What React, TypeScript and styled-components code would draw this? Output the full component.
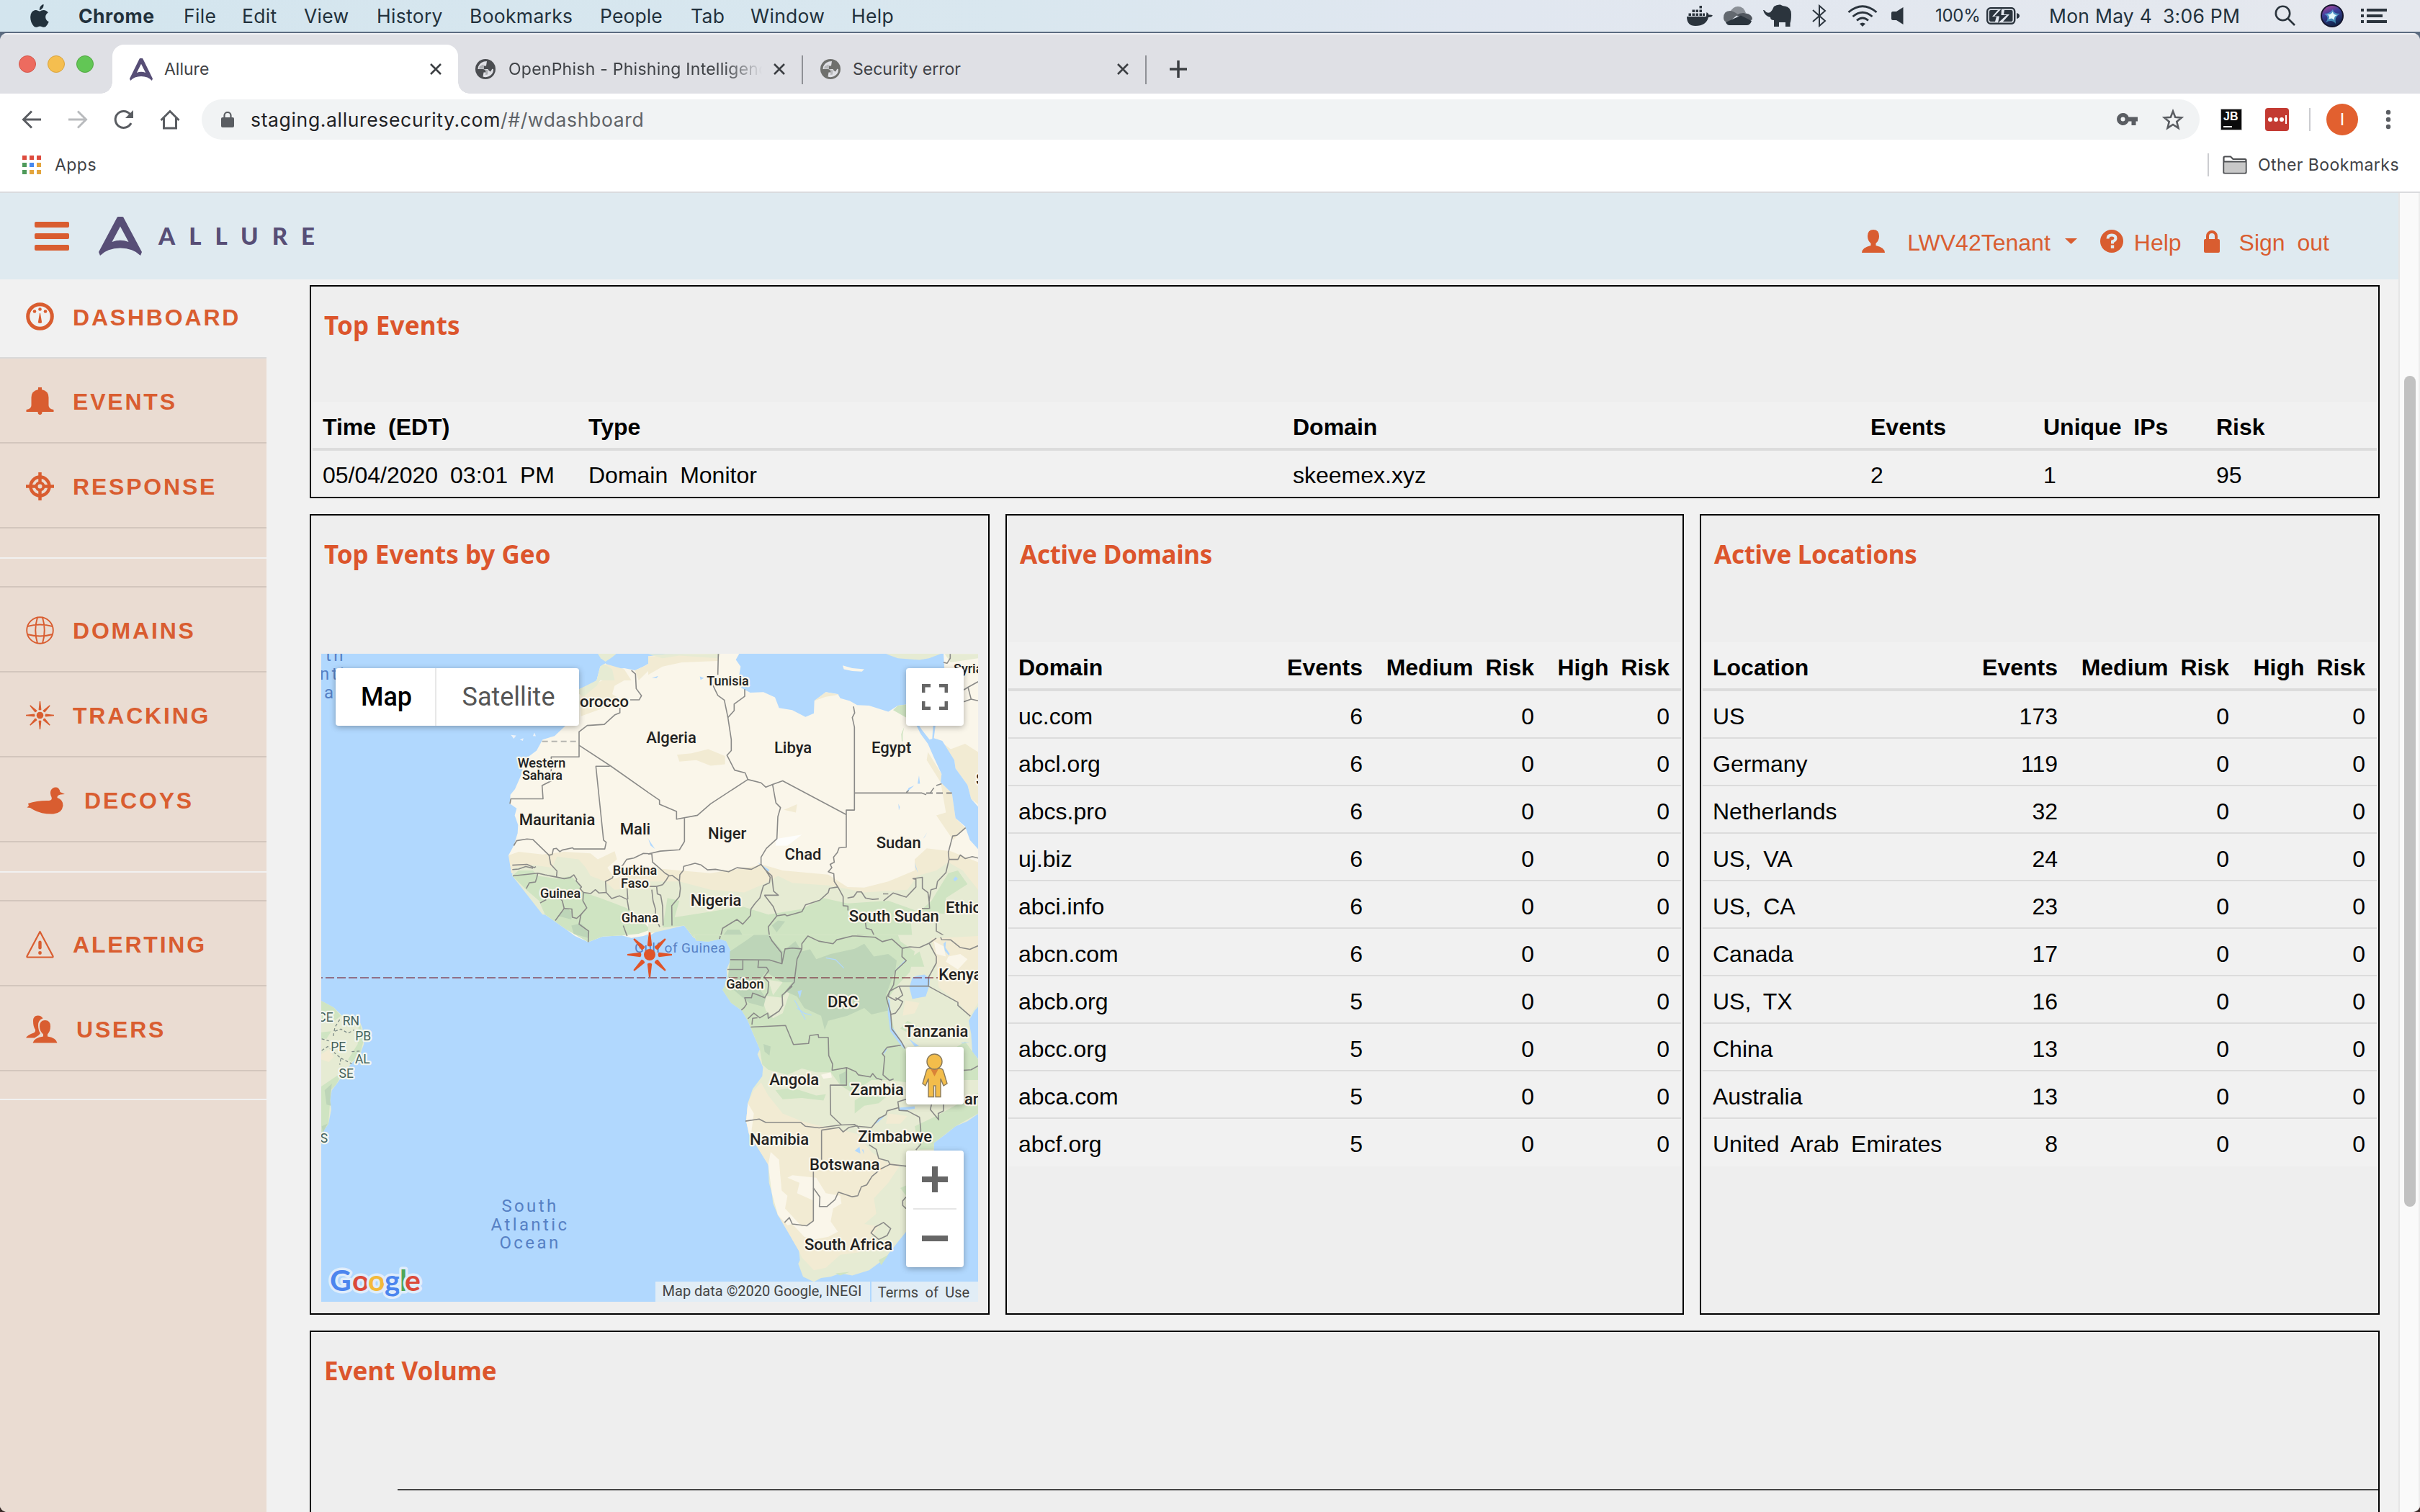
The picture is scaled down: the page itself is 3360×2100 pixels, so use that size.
import React from "react";
import styled, { createGlobalStyle } from "styled-components";

const ORANGE = "#d95d30";
const HELV = `"Liberation Sans", Arial, sans-serif`;
const UI = `Inter, "Liberation Sans", sans-serif`;
const ROBOTO = `Roboto, "Liberation Sans", sans-serif`;

const Global = createGlobalStyle`
  html, body { margin: 0; padding: 0; }
  body { width: 3360px; height: 2100px; overflow: hidden; background: #3b2b28; }
  * { box-sizing: border-box; }
  svg { display: block; flex: none; }
`;

/* ---------- desktop + menu bar ---------- */
const Desktop = styled.div`
  width: 3360px;
  height: 2100px;
  display: flex;
  flex-direction: column;
  background: linear-gradient(#5b6b80 0 200px, #3b2b28 1900px);
  overflow: hidden;
`;
const MenuBar = styled.div`
  height: 44px;
  flex: none;
  display: flex;
  align-items: center;
  padding: 0 46px 0 42px;
  background: linear-gradient(90deg, #d3e5ee 0, #d9e7ef 1400px, #e1e7f0 2100px, #e5e8ee 3360px);
  color: #22313c;
  font: 400 26.5px/44px ${UI};
  white-space: pre;
`;
const MenuItem = styled.span<{ $w: number; $bold?: boolean; $ls?: number }>`
  width: ${(p) => p.$w}px;
  flex: none;
  font-weight: ${(p) => (p.$bold ? 700 : 400)};
  letter-spacing: ${(p) => p.$ls ?? 0.3}px;
`;
const Slot = styled.span<{ $w: number }>`
  width: ${(p) => p.$w}px;
  flex: none;
  display: flex;
  align-items: center;
`;
const Percent = styled(Slot)`
  font-size: 24px;
  letter-spacing: -0.3px;
  text-indent: -2px;
`;
const Clock = styled(Slot)`
  letter-spacing: 0.25px;
`;
const Grow = styled.div`
  flex: 1;
`;

/* ---------- browser window ---------- */
const Window = styled.div`
  margin-top: 2px;
  flex: 1;
  min-height: 0;
  display: flex;
  flex-direction: column;
  border-radius: 10px;
  overflow: hidden;
  background: #fff;
`;
const TabStrip = styled.div`
  height: 84px;
  flex: none;
  display: flex;
  align-items: flex-end;
  background: #dfe0e5;
  border-top: 2px solid #f2f2f5;
  font: 400 23px/68px ${UI};
  color: #3f4246;
`;
const Lights = styled.div`
  width: 156px;
  height: 82px;
  display: flex;
  align-items: center;
  gap: 16px;
  padding-left: 26px;
`;
const Light = styled.i<{ $c: string; $b: string }>`
  width: 24px;
  height: 24px;
  border-radius: 50%;
  background: ${(p) => p.$c};
  border: 1px solid ${(p) => p.$b};
`;
const Tab = styled.div<{ $active?: boolean; $w: number }>`
  width: ${(p) => p.$w}px;
  height: 68px;
  display: flex;
  align-items: center;
  padding: 0 23px 0 ${(p) => (p.$active ? 24 : 24)}px;
  position: relative;
  border-radius: 16px 16px 0 0;
  background: ${(p) => (p.$active ? "#fff" : "transparent")};
  &::before, &::after {
    content: "";
    display: ${(p) => (p.$active ? "block" : "none")};
    position: absolute;
    bottom: 0;
    width: 16px;
    height: 16px;
  }
  &::before { left: -16px; background: radial-gradient(circle at 0 0, transparent 15.5px, #fff 16px); }
  &::after { right: -16px; background: radial-gradient(circle at 100% 0, transparent 15.5px, #fff 16px); }
`;
const TabTitle = styled.span<{ $fade?: boolean; $ml?: number }>`
  flex: 1;
  margin-left: ${(p) => p.$ml ?? 18}px;
  overflow: hidden;
  white-space: nowrap;
  margin-right: 16px;
  ${(p) => p.$fade && "letter-spacing: 0.25px; mask-image: linear-gradient(90deg, #000 85%, transparent 100%);"}
`;
const NewTab = styled.div`
  height: 68px;
  display: flex;
  align-items: center;
  padding-left: 32px;
`;
const TabRule = styled.i`
  width: 2px;
  height: 40px;
  margin-bottom: 13px;
  background: #8f9196;
`;
const Toolbar = styled.div`
  height: 72px;
  flex: none;
  display: flex;
  align-items: center;
  padding: 0 40px 0 30px;
`;
const NavIcons = styled.div`
  width: 250px;
  display: flex;
  gap: 36px;
`;
const Omnibox = styled.div`
  width: 2774px;
  height: 56px;
  border-radius: 28px;
  background: #f1f3f4;
  display: flex;
  align-items: center;
  padding: 0 22px 0 27px;
  font: 400 26.5px/56px ${UI};
  letter-spacing: 0.65px;
  color: #5f6368;
  b { font-weight: 400; color: #1f2124; }
  span { margin-left: 23px; }
`;
const Extensions = styled.div`
  flex: 1;
  display: flex;
  align-items: center;
  padding-left: 29px;
`;
const JBadge = styled.div`
  width: 30px;
  height: 30px;
  background: #0b0b0c;
  color: #fff;
  font: 700 16px/18px ${HELV};
  padding: 1px 3px;
  border: 1px solid #b9b9b9;
  &::after { content: ""; display: block; width: 12px; height: 2px; background: #fff; margin-top: 4px; }
`;
const PassBadge = styled.div`
  width: 33px;
  height: 32px;
  margin-left: 32px;
  border-radius: 4px;
  background: #c33a32;
  display: flex;
  align-items: center;
  justify-content: center;
  gap: 2px;
  i { width: 6px; height: 6px; border-radius: 50%; background: #fff; }
  b { width: 2px; height: 12px; background: #fff; }
`;
const VRule = styled.i<{ $ml: number }>`
  width: 2px;
  height: 32px;
  margin-left: ${(p) => p.$ml}px;
  background: #cbccd0;
`;
const Avatar = styled.div`
  width: 44px;
  height: 44px;
  margin-left: 22px;
  border-radius: 50%;
  background: #e2602f;
  color: #fff;
  text-align: center;
  font: 400 24px/44px ${ROBOTO};
`;
const Bookmarks = styled.div`
  height: 66px;
  flex: none;
  display: flex;
  align-items: center;
  padding: 0 29px 10px 31px;
  border-bottom: 2px solid #dadbde;
  font: 400 23px/56px ${UI};
  letter-spacing: 0.45px;
  color: #3f4246;
`;
const AppsGrid = styled.div`
  display: grid;
  grid-template-columns: repeat(3, 6px);
  gap: 4px;
  margin-right: 19px;
  i { height: 6px; }
`;
const FolderIcon = styled.svg`
  margin: 0 15px 0 19px;
`;
const StarIcon = styled.svg`
  margin-left: 33px;
`;

/* ---------- page ---------- */
const Viewport = styled.div`
  flex: 1;
  min-height: 0;
  display: flex;
`;
const Page = styled.div`
  width: 3330px;
  display: flex;
  flex-direction: column;
  background: #f1f1f1;
  font: 400 32px/36px ${HELV};
  word-spacing: 8px;
  color: #000;
`;
const Scroll = styled.div`
  width: 30px;
  padding: 254px 0 0 6px;
  background: #fafafa;
  border-left: 2px solid #e6e6e6;
  border-right: 2px solid #ededed;
`;
const Thumb = styled.div`
  width: 16px;
  height: 1154px;
  border-radius: 8px;
  background: #c1c1c1;
`;
const Header = styled.header`
  height: 120px;
  flex: none;
  display: flex;
  align-items: center;
  padding: 0 96px 0 48px;
  background: #dfeaf0;
  color: ${ORANGE};
`;
const Burger = styled.div`
  width: 48px;
  margin-right: 41px;
  display: grid;
  gap: 8px;
  i { height: 8px; border-radius: 2px; background: ${ORANGE}; }
`;
const Wordmark = styled.span`
  margin: 0 0 2px 23px;
  font: 900 33px/40px Lato, sans-serif;
  letter-spacing: 19px;
  color: #574e76;
`;
const UserNav = styled.nav`
  display: flex;
  align-items: center;
  padding-top: 14px;
  line-height: 40px;
`;
const NavText = styled.span<{ $ml: number; $mr: number }>`
  margin-left: ${(p) => p.$ml}px;
  margin-right: ${(p) => p.$mr}px;
  padding-top: 3px;
`;
const CircleHelp = styled.svg`
  margin-left: 32px;
`;
const Body = styled.div`
  flex: 1;
  min-height: 0;
  display: flex;
`;
const Sidebar = styled.aside`
  width: 370px;
  flex: none;
  background: #eadcd2;
`;
const SideItem = styled.div<{ $active?: boolean }>`
  height: ${(p) => (p.$active ? 110 : 118)}px;
  display: flex;
  align-items: center;
  padding: 0 0 0 36px;
  border-bottom: 2px solid ${(p) => (p.$active ? "#d9d9d9" : "#d3c6bd")};
  background: ${(p) => (p.$active ? "#f1f1f1" : "transparent")};
  color: ${ORANGE};
  font-weight: 700;
  letter-spacing: 2.8px;
  svg { margin: ${(p) => (p.$active ? -4 : 3)}px 25px 0 0; }
  span { padding-top: ${(p) => (p.$active ? 0 : 4)}px; margin-top: ${(p) => (p.$active ? -2 : 0)}px; }
`;
const SideGap = styled.div<{ $open?: boolean }>`
  height: ${(p) => (p.$open ? 40 : 82)}px;
  border-bottom: 2px solid ${(p) => (p.$open ? "#f1f1f1" : "#d3c6bd")};
  &::before {
    content: "";
    display: ${(p) => (p.$open ? "none" : "block")};
    height: 40px;
    border-bottom: 2px solid #f1f1f1;
  }
`;
const Main = styled.main`
  flex: 1;
  display: flex;
  flex-direction: column;
  gap: 22px;
  padding: 8px 26px 0 60px;
  min-width: 0;
`;
const Card = styled.section<{ $h: number }>`
  height: ${(p) => p.$h}px;
  flex: none;
  border: 2px solid #000;
  background: #eee;
  min-width: 0;
  display: flex;
  flex-direction: column;
`;
const Trio = styled.div`
  display: grid;
  grid-template-columns: 944px 942px 944px;
  gap: 22px;
`;
const Title = styled.h2<{ $h: number; $ls?: number }>`
  margin: 0;
  height: ${(p) => p.$h}px;
  flex: none;
  padding: 32px 0 0 18px;
  font: 700 35px/44px "Noto Sans", "Open Sans", sans-serif;
  letter-spacing: ${(p) => p.$ls ?? 0}px;
  word-spacing: 0;
  color: #dc552c;
`;
const Row = styled.div<{ $head?: boolean; $h: number }>`
  height: ${(p) => p.$h}px;
  flex: none;
  display: flex;
  align-items: center;
  padding: 5px 16px 0 14px;
  margin: 0 2px;
  background: #f1f1f1;
  font-weight: ${(p) => (p.$head ? 700 : 400)};
  border-bottom: ${(p) => (p.$head ? "4px solid #dcdcdc" : "2px solid #dcdcdc")};
  &:last-child { border-bottom-color: transparent; }
`;
const Cell = styled.span<{ $w?: number; $right?: boolean }>`
  ${(p) => (p.$w ? `width: ${p.$w}px; flex: none;` : "flex: 1;")}
  text-align: ${(p) => (p.$right ? "right" : "left")};
  white-space: nowrap;
`;
const TableWrap = styled.div`
  display: flex;
  flex-direction: column;
`;
const Axis = styled.div`
  margin-left: 120px;
  height: 2px;
  background: #444;
`;

/* ---------- map ---------- */
const MapCanvas = styled.div`
  width: 912px;
  height: 900px;
  margin-left: 14px;
  position: relative;
  overflow: hidden;
  background: #b1d8fe;
  font-family: ${ROBOTO};
`;
const Control = styled.div<{ $x: number; $y: number; $w: number; $h: number }>`
  position: absolute;
  left: ${(p) => p.$x}px;
  top: ${(p) => p.$y}px;
  width: ${(p) => p.$w}px;
  height: ${(p) => p.$h}px;
  background: #fff;
  border-radius: 4px;
  box-shadow: 0 2px 8px rgba(0, 0, 0, 0.3);
  display: flex;
  flex-direction: column;
  align-items: center;
  justify-content: space-evenly;
`;
const MapTypes = styled(Control)`
  flex-direction: row;
  justify-content: flex-start;
  font: 400 36px/80px ${ROBOTO};
  color: #565656;
  text-align: center;
  b { width: 140px; height: 80px; padding-left: 3px; font-weight: 500; color: #000; border-right: 2px solid #e8e8e8; }
  span { flex: 1; padding-left: 2px; }
`;
const ZoomRule = styled.i`
  width: 60px;
  height: 2px;
  background: #e6e6e6;
`;
const Credits = styled.div`
  position: absolute;
  right: 0;
  bottom: 0;
  height: 28px;
  display: flex;
  gap: 2px;
  font: 400 20px/26px ${ROBOTO};
  word-spacing: 0;
  color: #444;
  white-space: nowrap;
  span { background: #e1edf6; text-align: center; }
  span:first-child { width: 298px; padding-right: 2px; letter-spacing: 0; }
  span:last-child { width: 148px; padding-right: 3px; word-spacing: 4.5px; line-height: 30px; }
`;

const LAND = "#faf6ea";
const SAND = "#f2ebd3";
const PALE = "#e6ebd3";
const GREEN = "#cfe4c2";
const DARK = "#bdd5b8";
const SEA = "#b1d8fe";

const nwBorders = [
  "M1370 604 1387 617 1390 670 1412 696 1402 711 1365 711",
  "M1322 740 1322 758 1300 766 1257 800 1186 804 1152 827 1152 918 1036 918 1036 1005 998 1022 1002 1070 868 1070 864 1088",
  "M1152 876 1282 950 1486 1075 1486 1090 1500 1097",
  "M1280 952 1222 952 1254 1220 1265 1228 1259 1252 1130 1252 1125 1248 1082 1256 1072 1262 1058 1250 1045 1252 1040 1272 1027 1275 960 1218 935 1216 892 1222 880 1240",
  "M1027 1275 1034 1308 1060 1332 1058 1354 1010 1346 980 1340 876 1350",
  "M874 1311 935 1308 965 1320 972 1316M874 1327 900 1325 930 1316 960 1322",
  "M980 1340 976 1356 970 1372 945 1375 932 1396",
  "M1058 1354 1090 1360 1115 1356 1130 1346 1142 1362 1140 1368 1162 1390 1156 1396 1170 1410 1168 1440 1184 1466 1160 1490 1142 1504 1124 1500 1122 1470 1090 1468 1053 1512",
  "M1090 1468 1082 1440 1072 1432M990 1448 1015 1436M1160 1490 1152 1525 1192 1550 1190 1590",
  "M1170 1410 1200 1414 1220 1400 1235 1412 1265 1410 1288 1432 1320 1422 1352 1435 1360 1475M1336 1530 1352 1568",
  "M1265 1410 1262 1370 1290 1358 1300 1340 1335 1310 1350 1290 1380 1285 1420 1268 1460 1270 1500 1258",
  "M1460 1270 1458 1300 1490 1320M1352 1395 1355 1435M1443 1388 1455 1420 1465 1450 1470 1500 1490 1530",
];
const neBorders = [
  "M292 544 290 620M265 650 290 695 317 712 332 775 346 855 346 895 328 912 360 966 404 976 415 1000 470 1012 490 1028 518 1018 560 1005 824 1127",
  "M402 672 402 698 358 726 358 750 332 775",
  "M415 1000 260 1088 205 1130 118 1144 118 1116 47 1090 47 1075 0 1047",
  "M518 1018 532 1085 551 1102 540 1135 536 1215 492 1250 470 1282 470 1308 430 1326 370 1320 335 1335 280 1326 247 1328 220 1310 195 1304 148 1315 146 1330 132 1345 130 1368 134 1395 130 1425 98 1458 99 1530",
  "M151 1140 151 1225 130 1255 50 1260 0 1270",
  "M470 1308 490 1330 515 1350 522 1405 542 1420 484 1420M490 1330 508 1355 505 1375 480 1385 465 1430 445 1450 428 1470 425 1495 394 1525 370 1508 310 1540 302 1568",
  "M484 1420 520 1460 536 1495 500 1535 505 1568M536 1495 570 1490 578 1495 640 1480 655 1455 715 1438 750 1410 755 1395 790 1390 812 1425 812 1458 832 1460 832 1475",
  "M855 735 860 758 850 775 859 810 859 1111 825 1111 825 1246 795 1248 788 1265 772 1282 775 1300 758 1308 765 1320 750 1335 773 1342 775 1370 790 1390",
  "M859 1049 1140 1049 1158 1055M1075 1047 1085 1040M1175 1049 1190 1030M1200 1022 1222 1015",
  "M830 1430 855 1426 870 1408 888 1408 905 1430 935 1435 960 1433M978 1415 1000 1415M980 1440 1020 1412 1075 1427 1115 1390 1115 1362 1103 1360 1142 1355 1142 1395 1165 1410 1170 1440 1172 1468 1140 1468",
  "M1170 1440 1178 1400 1200 1395 1205 1370 1240 1338 1253 1290 1250 1265 1268 1205 1285 1203 1322 1175",
  "M1253 1290 1290 1290 1300 1274 1320 1287 1350 1280 1374 1285",
  "M905 1520 908 1540 930 1545 942 1568M1200 1520 1200 1550 1230 1565M870 1565 930 1568",
  "M1314 675 1332 665 1374 645M1332 665 1345 708M1314 718 1345 708 1374 714M1230 575 1245 578 1258 560 1258 544",
  "M0 1270 15 1270 18 1300 45 1320 70 1340 90 1350 100 1348 130 1368M0 1388 35 1388 60 1382 75 1365 85 1350M35 1388 38 1415 52 1420 60 1460 62 1530M15 1400 20 1440 30 1470 30 1500 48 1535",
];
const seBorders = [
  "M342 92 505 93 557 108 570 50 600 47 640 50M505 0 515 18 555 65 557 108M300 0 297 12",
  "M394 95 394 130 330 130M460 95 457 122 493 122 502 135 482 160 502 180 498 220 485 240 460 230 435 222 430 240 402 240 410 265 400 278 388 288",
  "M640 50 620 90 608 180 570 220M600 195 558 230 560 270 545 292 500 320 498 300 465 318 440 300 415 322M432 345 435 320 455 318",
  "M640 50 640 30 665 0 710 20 770 30 785 15 850 0 865 0 945 5 975 22 1015 12 1058 48 1057 80 1075 96 1030 135 1022 190 992 240 1010 300 1015 362 1052 408 1070 438",
  "M427 354 572 348 605 422 668 418 673 387 708 383 710 395 750 395 752 465 768 498 766 522 826 512 826 580 758 580 760 695 805 735",
  "M826 512 865 528 875 540 925 548 935 535 950 552 975 560",
  "M1058 48 1090 42 1130 45 1170 28 1200 8M1170 28 1200 80 1200 105 1168 160 1167 195 1045 195",
  "M1167 195 1290 258 1290 270 1342 312M1045 195 1060 230 1030 250 1000 235 1005 215 1045 195M1030 240 1060 255 1050 275 1030 300 1010 305",
  "M1052 425 995 433 975 458 985 470 978 540 1005 562 1022 556M1218 5 1222 14 1260 15 1300 45 1340 52 1374 38",
  "M405 720 462 712 490 725 635 725 655 740 712 746 800 735 860 733 870 740 930 745 960 710 990 695 995 680 1042 668",
  "M722 755 795 745 812 762 835 745 870 738 885 760M722 755 722 870M688 915 688 1108 660 1127 600 1120 588 1095 568 1114",
  "M688 980 715 1015 713 1052 745 1052 778 1025 792 996 850 1014 873 1010 888 975 910 968 932 935 970 905 1007 888 1074 895",
  "M920 812 950 830 960 865 1000 875 1007 888M1074 635 1040 645 1045 678 1080 680 1130 705 1135 750 1135 810 1115 832",
  "M1180 655 1175 675 1210 715 1208 690 1230 680 1230 655M928 1155 945 1132 980 1114 1010 1138 995 1165 960 1180ZM1074 1015 1060 1030 1060 1048 1074 1060M1314 522 1345 520 1374 505",
];

const Borders = ({ d }: { d: string[] }) => (
  <g fill="none" stroke="#8a8a88" strokeWidth={1.6} strokeLinejoin="round">
    {d.map((p) => (
      <path key={p} d={p} vectorEffect="non-scaling-stroke" />
    ))}
  </g>
);

type Label = [string, number, number, number?, ("start" | "end")?];
const labels: Label[] = [
  ["Morocco", 873, 982, 22, "end"],
  ["Western", 752, 1066, 18],
  ["Sahara", 753, 1083, 18],
  ["Mauritania", 773.5, 1146],
  ["Mali", 882, 1159],
  ["Burkina", 881.5, 1214.5, 18],
  ["Faso", 881.5, 1233, 18],
  ["Guinea", 778, 1246.5, 18],
  ["Ghana", 888.5, 1281, 18],
  ["Algeria", 932, 1032],
  ["Tunisia", 1010.5, 951.5, 18],
  ["Libya", 1101, 1046],
  ["Egypt", 1237.7, 1046],
  ["Niger", 1009.7, 1165],
  ["Chad", 1115, 1194],
  ["Sudan", 1247.7, 1178],
  ["Nigeria", 994, 1257.5],
  ["South Sudan", 1241.3, 1280],
  ["Ethiopia", 1313, 1268, 22, "start"],
  ["Syria", 1324, 934.5, 18, "start"],
  ["Saudi", 1355, 1089.5, 22, "start"],
  ["Gabon", 1034.3, 1372.5, 18],
  ["DRC", 1170.3, 1398.6],
  ["Kenya", 1303.3, 1361, 22, "start"],
  ["Tanzania", 1300, 1439.6],
  ["Angola", 1102.7, 1507],
  ["Zambia", 1217.7, 1520.7],
  ["Namibia", 1082, 1589.6],
  ["Zimbabwe", 1242.7, 1586.4],
  ["Botswana", 1172.7, 1624.6],
  ["South Africa", 1178, 1735.7],
  ["ar", 1339, 1534, 22, "start"],
];
const states: [string, number, number][] = [
  ["CE", 452, 1418.6],
  ["RN", 487.3, 1423.6],
  ["PB", 504.3, 1444.6],
  ["PE", 469.7, 1459.6],
  ["AL", 503.3, 1477],
  ["SE", 480.7, 1496.8],
  ["S", 450, 1586.8],
];

const RAYS = [0, 45, 90, 135, 180, 225, 270, 315];
const Burst = ({ r, dot }: { r: number; dot: number }) => (
  <g>
    <circle r={dot} />
    {RAYS.map((a) => (
      <path
        key={a}
        transform={`rotate(${a})`}
        d={`M${-dot * 0.4} ${-dot * 1.6}Q0 ${-dot * 1.3} ${dot * 0.4} ${-dot * 1.6}L${dot * 0.14} ${-r}H${-dot * 0.14}Z`}
      />
    ))}
  </g>
);

const googleLetters: [string, number, string][] = [
  ["G", 458, "#4c85ee"], ["o", 489, "#db4a3a"], ["o", 511, "#f3b93a"],
  ["g", 534, "#4c85ee"], ["l", 555, "#4fa65a"], ["e", 562, "#db4a3a"],
];

const AfricaMap = () => (
  <svg width="912" height="900" viewBox="446 908 912 900">
    {/* north-west */}
    <g transform="translate(420 700) scale(.33333 .38265)">
      <path fill={PALE} d="M1228 540 1242 560 1262 572 1290 556 1312 540Z" />
      <path
        fill={LAND}
        d="M1510 548 1470 565 1420 590 1385 604 1340 596 1290 602 1262 578 1240 590 1225 640 1200 655 1152 672 1130 760 1095 805 1050 842 1000 855 975 895 945 915 920 950 910 985 885 1035 866 1055 864 1088 892 1105 884 1130 898 1165 896 1195 880 1240 858 1275 880 1305 874 1350 900 1370 932 1400 985 1440 1010 1490 1060 1520 1100 1545 1135 1568 1190 1590 1250 1570 1330 1566 1370 1575 1420 1568 1510 1540Z"
      />
      <path fill={SAND} d="M1510 548 1420 590 1385 604 1400 640 1440 606 1510 620ZM1262 580 1250 640 1225 650 1152 672 1160 770 1240 745 1330 712 1290 690 1300 660 1340 640 1370 640 1340 600Z" />
      <path fill={PALE} d="M1256 580 1290 600 1300 640 1240 640 1225 660 1170 700 1152 690 1152 672 1225 640 1240 590Z" />
      <path fill={SAND} d="M858 1275 900 1262 1000 1272 1090 1262 1200 1268 1230 1290 1300 1260 1310 1290 1270 1320 1300 1360 1390 1330 1510 1350 1510 1400 1300 1430 870 1340Z" />
      <path fill={PALE} d="M880 1320 960 1310 1040 1320 1060 1280 1150 1290 1180 1320 1200 1350 1260 1370 1300 1400 1400 1390 1510 1400 1510 1500 1000 1490 874 1350Z" />
      <path fill={GREEN} d="M874 1350 900 1330 960 1330 980 1350 1060 1360 1120 1350 1150 1380 1170 1410 1240 1430 1300 1450 1360 1470 1400 1500 1450 1545 1400 1560 1330 1566 1250 1570 1190 1590 1100 1545 1010 1490 985 1440 932 1400Z" />
      <path fill={DARK} d="M1062 1495 1100 1466 1122 1480 1120 1508ZM1120 1530 1160 1522 1192 1550 1190 1575 1130 1560Z" />
      <path fill="#eef3f8" d="M868 838 890 840 880 852ZM905 855 920 850 918 860ZM960 842 966 830 972 843Z" />
      <path fill={SEA} d="M1455 636 1482 624 1480 632ZM1435 1210 1468 1252 1462 1250Z" />
      <Borders d={nwBorders} />
      <path d="M998 862H1152" stroke="#b5b5b0" strokeWidth="2" strokeDasharray="8 5" vectorEffect="non-scaling-stroke" />
    </g>
    {/* north-east */}
    <g transform="translate(900 700) scale(.33333 .38265)">
      <path
        fill={LAND}
        d="M0 553 70 545 380 542 365 565 385 590 375 640 388 668 425 685 480 683 528 702 545 740 600 748 655 773 690 760 692 715 740 683 790 690 800 705 840 715 870 730 920 732 1000 754 1040 732 1074 728 1240 700 1230 540 1380 540V1575H190L150 1530 100 1530 60 1537 0 1570Z"
      />
      <path fill={SAND} d="M0 553 300 544 290 570 140 575 60 590 0 620ZM120 910 180 905 250 890 320 915 320 945 260 950 200 930 130 935ZM690 715 740 683 795 692 740 700ZM565 1110 620 1090 615 1120ZM1200 850 1260 890 1320 870 1374 900V1090L1345 1070 1330 1020 1280 960 1275 930ZM1165 900 1222 980 1218 1010 1160 930ZM1218 1010 1265 1050 1280 1140 1320 1175 1270 1220 1200 1130 1240 1120Z" />
      <path fill={PALE} d="M0 545 60 560 130 550 290 560 300 544ZM990 544 1230 540 1170 560 1130 566 1040 560ZM1235 544 1374 544V560L1260 575Z" />
      <path fill={SAND} d="M0 1320 130 1330 260 1340 480 1310 560 1330 750 1345 830 1390 900 1392 1000 1370 1110 1330 1110 1290 1160 1250 1260 1260 1374 1300V1450H0Z" />
      <path fill={PALE} d="M0 1370 130 1370 260 1400 400 1410 480 1380 540 1350 600 1375 760 1385 900 1410 1080 1400 1120 1350 1200 1330 1250 1300 1310 1330 1374 1400V1575H190L150 1530 0 1560Z" />
      <path fill={GREEN} d="M60 1537 80 1430 130 1440 110 1500 260 1480 390 1460 500 1490 640 1470 730 1430 830 1450 1000 1440 1130 1480 1180 1440 1250 1340 1290 1330 1330 1380 1240 1430 1230 1530 1374 1500V1575H190L150 1530Z" />
      <path fill={PALE} d="M1090 1475 1374 1500 1374 1575 1100 1575Z" />
      <path fill={DARK} d="M310 1568 330 1545 380 1545 395 1568ZM515 1530 540 1512 570 1515 535 1555Z" />
      <path fill="#fdfdfb" d="M535 1215 640 1200 580 1240 530 1240Z" />
      <path fill={GREEN} d="M1074 728 1040 732 1020 748 1074 775ZM1066 810 1054 835 1056 862 1060 862 1060 835Z" />
      <path
        fill={SEA}
        d="M1115 800 1135 835 1165 870 1190 920 1222 980 1218 1010 1265 1050 1280 1140 1320 1170 1340 1220 1380 1258V1105L1345 1070 1330 1020 1280 960 1275 930 1225 860 1190 850 1197 800 1187 800 1183 852 1172 855 1140 820 1125 800ZM15 632 42 624 35 632ZM215 626 232 632 218 638ZM1085 1030 1108 1022 1075 1047ZM1122 1015 1128 985 1132 1015ZM1042 1088 1048 1100 1044 1112ZM1145 1215 1162 1192 1152 1208ZM1110 1300 1124 1340 1114 1320ZM1270 1362 1280 1352 1290 1360 1278 1370ZM0 1215 28 1252 10 1240ZM455 1300 505 1328 500 1335Z"
      />
      <path fill={LAND} d="M810 586 850 596 900 600 890 608 850 606 815 600Z" />
      <Borders d={neBorders} />
      <path d="M1158 1049H1265" stroke="#858585" strokeWidth="2" strokeDasharray="9 5" vectorEffect="non-scaling-stroke" />
    </g>
    {/* Brazil */}
    <g transform="translate(420 1300) scale(.33333 .35714)">
      <path fill={PALE} d="M70 248 130 278 165 310 235 325 250 360 256 420 240 460 200 500 140 578 122 600 115 640 120 675 108 730 78 770 70 770Z" />
      <path fill={GREEN} d="M70 248 130 278 160 310 120 340 70 330ZM235 325 256 400 240 460 205 490 190 480 230 420ZM70 375 120 370 100 400 70 400ZM180 510 140 578 118 600 108 730 78 770 70 770V590L150 540Z" />
      <path fill={DARK} d="M92 600 122 575 115 640 118 660 100 655ZM80 740 104 730 85 765Z" />
      <path fill={SAND} d="M78 460 110 440 130 470 110 490 78 480Z" />
      <path fill="none" stroke="#7d8b87" strokeWidth="1.3" strokeDasharray="4 3" vectorEffect="non-scaling-stroke" d="M155 325 135 355 128 390M135 370 160 362 190 378 215 365M80 400 110 408M80 445 105 430 140 460 160 475 155 500M160 475 205 497M205 450 245 447" />
    </g>
    {/* south-east */}
    <g transform="translate(900 1300) scale(.33333 .35714)">
      <path
        fill={PALE}
        d="M188 -4 200 18 250 22 300 12 325 20 345 60 340 100 326 130 330 170 310 210 345 260 390 290 415 330 430 365 465 440 455 460 478 510 475 545 435 595 415 650 408 720 420 770 455 820 500 890 503 960 515 1000 520 1040 540 1085 580 1125 600 1180 628 1225 632 1260 625 1275 645 1325 690 1345 720 1330 760 1325 800 1312 850 1320 920 1300 985 1255 1040 1190 1074 1150 1110 1050 1190 900 1190 805 1240 770 1280 740 1330 720 1380 688V485L1350 450 1345 380 1335 330 1360 290 1380 270V-4Z"
      />
      <path fill={GREEN} d="M190 -4 200 18 250 22 300 12 325 20 345 60 340 100 330 170 310 210 345 260 390 290 415 330 465 440 475 500 500 520 580 540 640 515 700 530 760 530 800 580 850 610 930 560 1000 560 1080 570 1072 438 1030 390 1010 300 1000 240 1040 190 1090 140 1110 60 1050 20 1040 -4Z" />
      <path fill={PALE} d="M470 230 560 240 600 190 560 300 520 320 490 290ZM500 170 560 180 520 230Z" />
      <path fill={DARK} d="M340 60 420 10 440 -4 500 -4 560 60 640 0 700 90 760 70 860 50 900 30 940 80 1000 70 1035 95 1030 130 990 230 1000 290 930 305 900 280 830 310 750 330 735 365 720 310 650 280 620 235 570 215 600 180 560 180 490 140 450 190 490 240 480 275 420 260 330 190 340 100ZM480 420 510 430 505 465 485 450ZM795 540 826 525 826 575 800 575Z" />
      <path fill={GREEN} d="M600 0 740 0 720 40 640 60ZM530 600 600 590 700 620 740 615 730 640 640 630 560 635ZM860 640 930 600 1000 620 960 650 900 660 860 690ZM1270 440 1320 410 1374 480V560H1314V440ZM1110 740 1200 700 1374 610V690L1280 740 1190 805V830H1130ZM1080 120 1100 80 1130 60 1150 120ZM1050 360 1080 330 1120 350 1090 380ZM1050 980 1074 970V1010ZM960 1260 1000 1240 970 1280ZM780 1312 840 1306 800 1320Z" />
      <path fill={SAND} d="M440 600 470 570 500 620 560 690 640 720 722 740 790 750 870 770 930 840 990 880 1050 890 1000 960 940 1020 950 1080 900 1120 960 1130 920 1180 880 1230 800 1240 740 1290 690 1300 640 1250 628 1225 600 1180 540 1085 500 890 420 770 408 720 415 650ZM1180 10 1374 0V260L1340 310 1290 258 1210 200 1200 105ZM1070 250 1130 260 1110 300 1060 310ZM1000 690 1080 700 1050 730 990 730Z" />
      <path fill={LAND} d="M415 650 440 690 430 760 450 800 420 770 408 720ZM510 840 545 870 550 930 556 990 580 1010 570 1060 640 1130 690 1110 690 1030 620 1000 630 960 580 940 600 930 700 940 740 1000 800 1010 805 1040 770 1060 760 1110 790 1150 750 1170 690 1180 650 1170 600 1120 580 1125 540 1085 515 1000 500 890ZM1250 80 1300 70 1330 90 1290 130 1240 100ZM1190 20 1230 40 1240 80 1200 70ZM720 540 760 530 765 550 730 555Z" />
      <path fill={SEA} d="M1100 162 1120 155 1150 150 1174 165 1172 190 1156 235 1100 245 1088 200ZM1230 30 1240 20 1238 45 1256 70 1252 75 1236 58ZM1000 240 1006 250 1014 350 1066 425 1070 440 1056 430 1008 370 998 300ZM622 215 640 210 632 242ZM860 835 880 820 884 846ZM890 830 896 830 900 850ZM1045 668 1110 662 1110 672 1050 680ZM932 740 960 710 988 698 960 722ZM985 438 996 440 978 464ZM1086 400 1128 428 1110 430ZM1302 415 1340 412 1310 418Z" />
      <path fill="none" stroke={SEA} strokeWidth="1.2" vectorEffect="non-scaling-stroke" d="M610 250 640 300 655 325M620 280 650 300 680 308M740 85 780 92 815 125M1030 135 1070 96" />
      <Borders d={seBorders} />
    </g>
    <path d="M446 1358H1302" stroke="#7d2f3f" strokeOpacity=".62" strokeWidth="1.8" strokeDasharray="12 4" strokeDashoffset="10" />
    <g fontFamily={ROBOTO} textAnchor="middle" wordSpacing="0">
      <g fontWeight="500" fill="#222" stroke={LAND} strokeWidth="4.5" strokeLinejoin="round" paintOrder="stroke">
        {labels.map(([t, x, y, s, a]) => (
          <text key={t} x={x} y={y} fontSize={s ?? 22} textAnchor={a ?? "middle"}>
            {t}
          </text>
        ))}
      </g>
      <g fontSize="17.5" fill="#47635d" stroke="#f2f6ee" strokeWidth="4.5" strokeLinejoin="round" paintOrder="stroke">
        {states.map(([t, x, y]) => (
          <text key={t} x={x} y={y}>{t}</text>
        ))}
      </g>
      <g fill="#5680c4" fontSize="24" letterSpacing="3.4">
        <text x="736" y="1683">South</text>
        <text x="736" y="1708.5">Atlantic</text>
        <text x="736" y="1734">Ocean</text>
        <text x="452" y="918" textAnchor="start">th</text>
        <text x="444" y="944" textAnchor="start">ntic</text>
        <text x="450" y="970" textAnchor="start">a</text>
      </g>
      <text x="881" y="1322.5" fill="#5680c4" fontSize="19" letterSpacing=".45" textAnchor="start">Gulf of Guinea</text>
    </g>
    <g fill="#df5429" transform="translate(902 1326)">
      <Burst r={31} dot={8} />
    </g>
    <g fontFamily="Lato, sans-serif" fontSize="41" fontWeight="700" stroke="#e0edfb" strokeWidth="7" strokeLinejoin="round" paintOrder="stroke">
      <text y="1793">
        {googleLetters.map(([c, x, f]) => (
          <tspan key={x} x={x} fill={f}>{c}</tspan>
        ))}
      </text>
    </g>
  </svg>
);

/* ---------- icons ---------- */
const ALogo = ({ w, h }: { w: number; h: number }) => (
  <svg width={w} height={h} viewBox="0 0 60 54" preserveAspectRatio="none">
    <path fill="#574e76" fillRule="evenodd" d="M27 0H33Q34.500 0 35.500 3L60 49 58 54Q48 43.500 30 43.500T2 54L0 49 24.500 3Q25.500 0 27 0ZM30 13.500 18.500 35Q30 30.500 41.500 35Z" />
  </svg>
);
const Globe = ({ c }: { c: string }) => (
  <svg width="28" height="28" viewBox="0 0 28 28">
    <circle cx="14" cy="14" r="14" fill={c} />
    <path fill="#dfe0e5" d="M16 3Q7 3 4 10.500L3.500 14H10Q14 14 14.500 18.500H11.500L10.500 24.500Q15 26 19 24 25 21 25 14.500L23.500 13.500 21 17.500Q18.500 17 17.500 14H12V9.500H15Z" />
    <path fill={c} d="M6 10 11 7.500 12 9.500V14L17.500 15.500 17 21.500 14 22 14.500 18 11 13.500H5Z" opacity=".35" />
  </svg>
);
const Cross = () => (
  <svg width="16" height="16" viewBox="0 0 16 16" stroke="#3c3f43" strokeWidth="2.6">
    <path d="M1 1 15 15M15 1 1 15" />
  </svg>
);
const svgLine = { fill: "none", stroke: "#5a5d62", strokeWidth: 3 } as const;

const sideIcons: Record<string, React.ReactNode> = {
  DASHBOARD: (
    <svg width="40" height="40" viewBox="0 0 40 40" fill={ORANGE}>
      <circle cx="19.500" cy="19.500" r="16.800" fill="none" stroke={ORANGE} strokeWidth="5" />
      <circle cx="12" cy="12.500" r="2.300" /><circle cx="19.500" cy="9.500" r="2.300" /><circle cx="27" cy="12.500" r="2.300" />
      <path d="M19 15H20L22.200 28Q19.500 30 16.800 28Z" />
    </svg>
  ),
  EVENTS: (
    <svg width="40" height="40" viewBox="0 0 40 40" fill={ORANGE}>
      <path d="M17 0H22V3Q31.500 5 31.500 14V25Q31.500 30 38.500 31V34H22.500Q22.500 38 19.500 38T16.500 34H.5V31Q7.500 30 7.500 25V14Q7.500 5 17 3Z" />
    </svg>
  ),
  RESPONSE: (
    <svg width="40" height="40" viewBox="0 0 40 40" fill="none" stroke={ORANGE} strokeWidth="4.500">
      <circle cx="19.500" cy="19.500" r="13" />
      <circle cx="19.500" cy="19.500" r="5" strokeWidth="4" />
      <path d="M19.500 0V14M19.500 25V39M0 19.500H14M25 19.500H39" />
    </svg>
  ),
  DOMAINS: (
    <svg width="40" height="40" viewBox="0 0 40 40" fill="none" stroke={ORANGE} strokeWidth="1.900">
      <circle cx="19.500" cy="19.500" r="18.300" />
      <path d="M16 1.500Q10.500 19.500 16 37.500M23 1.500Q28.500 19.500 23 37.500M2 14Q19.500 9 37 14M2 25Q19.500 30 37 25" />
    </svg>
  ),
  TRACKING: (
    <svg width="40" height="40" viewBox="0 0 40 40" fill={ORANGE}>
      <g transform="translate(19.500 19.500)"><Burst r={19.5} dot={4.8} /></g>
    </svg>
  ),
  DECOYS: (
    <svg width="56" height="40" viewBox="0 0 56 40" fill={ORANGE}>
      <path d="M3 24Q16 19.500 32 20Q37 19.500 35.500 15Q33 10 34.500 6Q37 1 42 1.500Q46.500 2 47.500 8L54 11 48 11.500Q43 12.500 43.500 16Q52 19 51.500 27Q50 37.500 38 38.500 22 39 11 33L6 30 1.500 29.500 4 27Z" />
    </svg>
  ),
  ALERTING: (
    <svg width="40" height="40" viewBox="0 0 40 40" fill={ORANGE}>
      <path d="M19.500 2 37.500 36Q38 37.500 36.500 37.500H2.500Q1 37.500 1.500 36Z" fill="none" stroke={ORANGE} strokeWidth="2.200" strokeLinejoin="round" />
      <rect x="17.300" y="14.500" width="4.400" height="12" rx="2.200" /><circle cx="19.500" cy="31.500" r="2.400" />
    </svg>
  ),
  USERS: (
    <svg width="45" height="40" viewBox="0 0 45 40" fill={ORANGE}>
      <path d="M10 8Q10 .5 16.500 .5 21.500 .5 23.500 4.500 17 6.500 17 14 17 21 20 25 19 27.500 12 31.500H0Q2 27.500 11 24.500 13.500 23 13 20 10 16 10 8Z" />
      <path d="M19 15.500Q19 7 26.500 7T34 15.500Q34 22 30 26.500V29.500Q42 31.500 43.500 38.500H9.500Q11 31.500 24 29.500V26.500Q19 22 19 15.500Z" />
    </svg>
  ),
};

const Side = ({ name, active }: { name: string; active?: boolean }) => (
  <SideItem $active={active}>
    {sideIcons[name]}
    <span>{name}</span>
  </SideItem>
);

const domains: [string, number][] = [
  ["uc.com", 6], ["abcl.org", 6], ["abcs.pro", 6], ["uj.biz", 6], ["abci.info", 6],
  ["abcn.com", 6], ["abcb.org", 5], ["abcc.org", 5], ["abca.com", 5], ["abcf.org", 5],
];
const locations: [string, number][] = [
  ["US", 173], ["Germany", 119], ["Netherlands", 32], ["US, VA", 24], ["US, CA", 23],
  ["Canada", 17], ["US, TX", 16], ["China", 13], ["Australia", 13], ["United Arab Emirates", 8],
];

type RiskCardProps = { title: string; head: string; rows: [string, number][]; last: number };
const RiskCard = ({ title, head, rows, last }: RiskCardProps) => (
  <Card $h={1112}>
    <Title $h={176} $ls={-0.3}>{title}</Title>
    <TableWrap>
      <Row $head $h={68}>
        <Cell>{head}</Cell>
        <Cell $w={130} $right>Events</Cell>
        <Cell $w={238} $right>Medium Risk</Cell>
        <Cell $w={last} $right>High Risk</Cell>
      </Row>
      {rows.map(([name, n]) => (
        <Row $h={66} key={name}>
          <Cell>{name}</Cell>
          <Cell $w={130} $right>{n}</Cell>
          <Cell $w={238} $right>0</Cell>
          <Cell $w={last} $right>0</Cell>
        </Row>
      ))}
    </TableWrap>
  </Card>
);

const MenuIcons = () => (
  <>
    <Slot $w={51}>
      <svg width="36" height="28" viewBox="0 0 36 28" fill="#2b343d">
        <path d="M0 15H27Q27 12 27.500 9Q30 10 30.500 12.500 34 12 36 13.500 34.500 16 30 16 27 28 12 28 0 28 0 15ZM2.500 10.500h3.500v3.500h-3.500ZM7.500 10.500h3.500v3.500h-3.500ZM12.500 10.500h3.500v3.500h-3.500ZM17.500 10.500h3.500v3.500h-3.500ZM22 10.500h3v3.500h-3ZM7.500 5.500h3.500v3.500h-3.500ZM12.500 5.500h3.500v3.500h-3.500ZM17.500 5.500h3.500v3.500h-3.500ZM17.500 0h3.500v3.500h-3.500Z" />
      </svg>
    </Slot>
    <Slot $w={55}>
      <svg width="40" height="26" viewBox="0 0 40 26">
        <path fill="#8b9097" d="M9 8Q13 0 20 0 28 0 31 9L20 14Z" />
        <path fill="#62686f" d="M0 16Q0 6 9 6 13 6 20 11L6 23Q0 21 0 16Z" />
        <path fill="#50565e" d="M18 12Q24 8 31 9.500 40 11 40 18L36 20Z" />
        <path fill="#2b343d" d="M3 22 24 12.500 39 20Q37 26 32 26H8Q5 26 3 22Z" />
      </svg>
    </Slot>
    <Slot $w={68}>
      <svg width="40" height="32" viewBox="0 0 40 32" fill="#2b343d">
        <path d="M0 8Q1.500 7.500 2.500 9 5 13 10 11 13 8 15 3 19 0 24 .5 28 3 30 2.500 39 4 39 14 39 22 37.500 26V31H31V25H22V31H15L15 22Q10 22 10 18 2 16 0 8Z" />
      </svg>
    </Slot>
    <Slot $w={49}>
      <svg width="20" height="32" viewBox="0 0 20 32" fill="none" stroke="#2b343d" strokeWidth="2">
        <path d="M1 8 18 23 10 30V2L18 9 1 24" />
      </svg>
    </Slot>
    <Slot $w={61}>
      <svg width="42" height="30" viewBox="0 0 42 30" fill="none" stroke="#2b343d" strokeWidth="2.800">
        <path d="M1.500 10Q21-6.500 40.500 10M7.500 16Q21 4.500 34.500 16M13 21.500Q21 14.500 29 21.500" />
        <path d="M17 26Q21 23 25 26L21 30Z" fill="#2b343d" stroke="none" />
      </svg>
    </Slot>
    <Slot $w={63}>
      <svg width="18" height="24" viewBox="0 0 18 24" fill="#2b343d">
        <path d="M0 8Q0 6 2 6H7L16.500 0V24L7 18H2Q0 18 0 16Z" />
      </svg>
    </Slot>
  </>
);

export default function App() {
  return (
    <Desktop>
      <Global />
      <MenuBar>
        <Slot $w={67}>
          <svg width="26" height="32" viewBox="0 0 26 32" fill="#22313c">
            <path d="M18.500 0Q19 3.500 16.500 6T12.800 7.800Q12.500 4.500 14.700 2.300T18.500 0ZM13.300 9.700Q15.500 8 18.500 8 22.500 8.200 24.800 11.500 21 14 21.200 18 21.500 22.500 25.800 24.200 24 28.500 21.500 31 19.300 32.500 16.500 31.200 13.500 30 10.500 31.200 7.300 32.700 5 30.500 0 25 .2 17.500 .5 10 6 8.300 8.700 7.700 11 9Z" />
          </svg>
        </Slot>
        <MenuItem $w={146} $bold $ls={0.5}>Chrome</MenuItem>
        <MenuItem $w={81}>File</MenuItem>
        <MenuItem $w={86}>Edit</MenuItem>
        <MenuItem $w={101}>View</MenuItem>
        <MenuItem $w={129}>History</MenuItem>
        <MenuItem $w={181}>Bookmarks</MenuItem>
        <MenuItem $w={126} $ls={0.1}>People</MenuItem>
        <MenuItem $w={83}>Tab</MenuItem>
        <MenuItem $w={140}>Window</MenuItem>
        <MenuItem $w={70}>Help</MenuItem>
        <Grow />
        <MenuIcons />
        <Percent $w={69}>100%</Percent>
        <Slot $w={87}>
          <svg width="46" height="24" viewBox="0 0 46 24" fill="#2b343d">
            <rect x="1.200" y="1.200" width="38" height="21.600" rx="4.500" fill="none" stroke="#2b343d" strokeWidth="2.400" />
            <path d="M4 6Q4 4 6 4H16L8 13H14L12 20H6Q4 20 4 18ZM25 4H34.500Q36.500 4 36.500 6V18Q36.500 20 34.500 20H23L32 10H24ZM42 8Q46 9 46 12T42 16Z" />
            <path d="M21 2 11 12.500H18L16 22 28 11H20.500Z" />
          </svg>
        </Slot>
        <Clock $w={158}>Mon May 4</Clock>
        <Clock $w={155}>3:06 PM</Clock>
        <Slot $w={64}>
          <svg width="30" height="30" viewBox="0 0 30 30" fill="none" stroke="#2b343d" strokeWidth="2.600">
            <circle cx="11.500" cy="11.500" r="9.700" /><path d="M18.500 18.500 28 28" />
          </svg>
        </Slot>
        <Slot $w={56}>
          <svg width="32" height="32" viewBox="0 0 32 32">
            <defs>
              <linearGradient id="siri" x1="0" y1="0" x2=".4" y2="1">
                <stop offset="0" stopColor="#c0469c" /><stop offset=".45" stopColor="#3a3f9b" /><stop offset="1" stopColor="#132650" />
              </linearGradient>
            </defs>
            <circle cx="16" cy="16" r="16" fill="#14152e" />
            <circle cx="16" cy="16" r="14" fill="url(#siri)" />
            <path d="M5 13Q13 13 17 7 17.500 13 27 13 19 17 21 27 16 20 7 25 13 18 5 13Z" fill="#5cc4e6" opacity=".6" />
            <path d="M9 14Q14.500 15 17 10 17 14.500 23 15 18 16.500 19 22 16 17.500 11 21 14 17 9 14Z" fill="#e2f8fb" />
          </svg>
        </Slot>
        <svg width="36" height="20" viewBox="0 0 36 20" fill="#2b343d">
          <path d="M0 0H4V4H0ZM8 0H36V4H8ZM0 8H4V12H0ZM8 8H30V12H8ZM0 16H4V20H0ZM8 16H36V20H8Z" />
        </svg>
      </MenuBar>

      <Window>
        <TabStrip>
          <Lights>
            <Light $c="#ed6b5f" $b="#d3574c" />
            <Light $c="#f5be4f" $b="#d9a33c" />
            <Light $c="#62c655" $b="#4fa73f" />
          </Lights>
          <Tab $active $w={480}>
            <ALogo w={32} h={31} />
            <TabTitle $ml={16}>Allure</TabTitle>
            <Cross />
          </Tab>
          <Tab $w={477}>
            <Globe c="#4b4d51" />
            <TabTitle $fade>OpenPhish - Phishing Intelligence</TabTitle>
            <Cross />
          </Tab>
          <TabRule />
          <Tab $w={475}>
            <Globe c="#6f706d" />
            <TabTitle $ml={17}>Security error</TabTitle>
            <Cross />
          </Tab>
          <TabRule />
          <NewTab>
            <svg width="24" height="24" viewBox="0 0 24 24" stroke="#3c3f43" strokeWidth="3.500"><path d="M12 0V24M0 12H24" /></svg>
          </NewTab>
        </TabStrip>

        <Toolbar>
          <NavIcons>
            <svg width="28" height="28" viewBox="0 0 28 28" {...svgLine}><path d="M27 14H3M14 2.500 2.500 14 14 25.500" /></svg>
            <svg width="28" height="28" viewBox="0 0 28 28" {...svgLine} stroke="#b9bbbe"><path d="M1 14H25M14 2.500 25.500 14 14 25.500" /></svg>
            <svg width="28" height="28" viewBox="0 0 28 28" {...svgLine}><path d="M24 19A11.500 11.500 0 1 1 22.500 6.500" /><path d="M27 1V12H16Z" fill="#5a5d62" stroke="none" /></svg>
            <svg width="28" height="28" viewBox="0 0 28 28" {...svgLine}><path d="M1.500 15 14 2.500 26.500 15M5.500 12V26H22.500V12" /></svg>
          </NavIcons>
          <Omnibox>
            <svg width="18" height="22" viewBox="0 0 18 22"><rect y="8" width="18" height="14" rx="2" fill="#5a5d62" /><path d="M4.500 9V5.500a4.500 4.500 0 0 1 9 0V9" fill="none" stroke="#5a5d62" strokeWidth="2.200" /></svg>
            <span><b>staging.alluresecurity.com</b>/#/wdashboard</span>
            <Grow />
            <svg width="30" height="18" viewBox="0 0 30 18" fill="#5a5d62"><path fillRule="evenodd" d="M8.500 0A8.500 8.500 0 0 1 16.500 5.500H29V11.500H26.500V17H20.500V11.500H16.500A8.500 8.500 0 1 1 8.500 0ZM8.500 5.500A3 3 0 1 0 8.500 11.500 3 3 0 0 0 8.500 5.500Z" /></svg>
            <StarIcon width="30" height="30" viewBox="0 0 30 30" fill="none" stroke="#5a5d62" strokeWidth="2.600"><path d="M15 3.500 18.200 11.800 27 12.400 20.300 18 22.500 26.800 15 22 7.500 26.800 9.700 18 3 12.400 11.800 11.800Z" /></StarIcon>
          </Omnibox>
          <Extensions>
            <JBadge>JB</JBadge>
            <PassBadge><i /><i /><i /><b /></PassBadge>
            <VRule $ml={28} />
            <Avatar>I</Avatar>
            <Grow />
            <svg width="8" height="28" viewBox="0 0 8 28" fill="#5a5d62"><circle cx="4" cy="4" r="3.200" /><circle cx="4" cy="14" r="3.200" /><circle cx="4" cy="24" r="3.200" /></svg>
          </Extensions>
        </Toolbar>

        <Bookmarks>
          <AppsGrid>
            {["#dd4b3e", "#dd4b3e", "#dd4b3e", "#4f9a5b", "#4688ee", "#e3a53d", "#4f9a5b", "#e3a53d", "#e3a53d"].map((c, i) => (
              <i key={i} style={{ background: c }} />
            ))}
          </AppsGrid>
          Apps
          <Grow />
          <VRule $ml={0} />
          <FolderIcon width="34" height="26" viewBox="0 0 34 26">
            <path d="M1.500 24V3Q1.500 1.500 3 1.500H11L14.500 5H31Q32.500 5 32.500 6.500V23Q32.500 24.500 31 24.500H3Q1.500 24.500 1.500 24Z" fill="#fff" stroke="#4d4f52" strokeWidth="2.200" />
            <path d="M2.500 9H31.500V23.500H2.500Z" fill="#c8c8c8" /><path d="M2 8.500H32" stroke="#4d4f52" strokeWidth="1.800" />
          </FolderIcon>
          Other Bookmarks
        </Bookmarks>

        <Viewport>
          <Page>
            <Header>
              <Burger><i /><i /><i /></Burger>
              <ALogo w={60} h={54} />
              <Wordmark>ALLURE</Wordmark>
              <Grow />
              <UserNav>
                <svg width="34" height="32" viewBox="0 0 34 32" fill={ORANGE}><path d="M17 0Q25 0 25 9 25 15 20.500 19V22Q33 25 33 32H1Q1 25 13.500 22V19Q9 15 9 9 9 0 17 0Z" /></svg>
                <NavText $ml={30} $mr={20}>LWV42Tenant</NavText>
                <svg width="17" height="8" viewBox="0 0 17 8" fill={ORANGE}><path d="M0 0H17L8.500 8Z" /></svg>
                <CircleHelp width="32" height="32" viewBox="0 0 32 32">
                  <circle cx="16" cy="16" r="16" fill={ORANGE} />
                  <path d="M10.500 12.500Q10.500 7.500 16 7.500T21.500 12Q21.500 15 17 16.500V19.500" fill="none" stroke="#dfeaf0" strokeWidth="4" />
                  <rect x="14.800" y="21.500" width="4.400" height="4.400" fill="#dfeaf0" />
                </CircleHelp>
                <NavText $ml={15} $mr={31}>Help</NavText>
                <svg width="22" height="31" viewBox="0 0 22 31"><rect y="12" width="22" height="19" rx="2" fill={ORANGE} /><path d="M5 13V8a6 6 0 0 1 12 0V13" fill="none" stroke={ORANGE} strokeWidth="4" /></svg>
                <NavText $ml={27} $mr={0}>Sign out</NavText>
              </UserNav>
            </Header>
            <Body>
              <Sidebar>
                <Side name="DASHBOARD" active />
                <Side name="EVENTS" />
                <Side name="RESPONSE" />
                <SideGap />
                <Side name="DOMAINS" />
                <Side name="TRACKING" />
                <Side name="DECOYS" />
                <SideGap />
                <Side name="ALERTING" />
                <Side name="USERS" />
                <SideGap $open />
              </Sidebar>
              <Main>
                <Card $h={296}>
                  <Title $h={160} $ls={0.2}>Top Events</Title>
                  <TableWrap>
                    <Row $head $h={68}>
                      <Cell $w={369}>Time (EDT)</Cell>
                      <Cell $w={978}>Type</Cell>
                      <Cell $w={802}>Domain</Cell>
                      <Cell $w={240}>Events</Cell>
                      <Cell $w={240}>Unique IPs</Cell>
                      <Cell>Risk</Cell>
                    </Row>
                    <Row $h={64}>
                      <Cell $w={369}>05/04/2020 03:01 PM</Cell>
                      <Cell $w={978}>Domain Monitor</Cell>
                      <Cell $w={802}>skeemex.xyz</Cell>
                      <Cell $w={240}>2</Cell>
                      <Cell $w={240}>1</Cell>
                      <Cell>95</Cell>
                    </Row>
                  </TableWrap>
                </Card>
                <Trio>
                  <Card $h={1112}>
                    <Title $h={192}>Top Events by Geo</Title>
                    <MapCanvas>
                      <AfricaMap />
                      <MapTypes $x={20} $y={20} $w={338} $h={80}>
                        <b>Map</b>
                        <span>Satellite</span>
                      </MapTypes>
                      <Control $x={812} $y={20} $w={80} $h={80}>
                        <svg width="36" height="36" viewBox="0 0 36 36" fill="none" stroke="#666" strokeWidth="4.500">
                          <path d="M2.200 12V2.200H12M24 2.200H33.800V12M33.800 24V33.800H24M12 33.800H2.200V24" />
                        </svg>
                      </Control>
                      <Control $x={812} $y={546} $w={80} $h={80}>
                        <svg width="36" height="62" viewBox="0 0 36 62">
                          <path d="M10 21H25Q29 21 30 25L35 42 30 45 26 35V60.500H19V45H16.500V60.500H9V35L5 45 1 42 6 25Q7 21 10 21Z" fill="#f3bd4b" stroke="#8a7b5c" strokeWidth="1.400" />
                          <path d="M12 21.500H23L17.500 32Z" fill="#d98338" />
                          <circle cx="17.500" cy="11.500" r="10.500" fill="#f3bd4b" stroke="#8a7b5c" strokeWidth="1.400" />
                        </svg>
                      </Control>
                      <Control $x={812} $y={690} $w={80} $h={162}>
                        <svg width="36" height="36" viewBox="0 0 36 36" stroke="#666" strokeWidth="8"><path d="M18 0V36M0 18H36" /></svg>
                        <ZoomRule />
                        <svg width="36" height="36" viewBox="0 0 36 36" stroke="#666" strokeWidth="8"><path d="M0 18H36" /></svg>
                      </Control>
                      <Credits>
                        <span>Map data ©2020 Google, INEGI</span>
                        <span>Terms of Use</span>
                      </Credits>
                    </MapCanvas>
                  </Card>
                  <RiskCard title="Active Domains" head="Domain" rows={domains} last={188} />
                  <RiskCard title="Active Locations" head="Location" rows={locations} last={189} />
                </Trio>
                <Card $h={400}>
                  <Title $h={218}>Event Volume</Title>
                  <Axis />
                </Card>
              </Main>
            </Body>
          </Page>
          <Scroll><Thumb /></Scroll>
        </Viewport>
      </Window>
    </Desktop>
  );
}
